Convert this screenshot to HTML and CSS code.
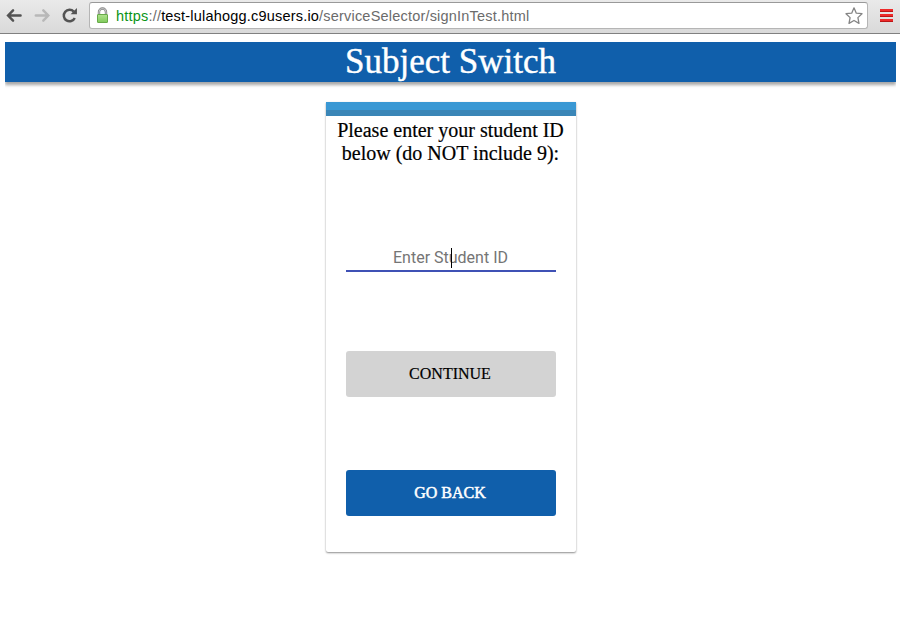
FILE: index.html
```html
<!DOCTYPE html>
<html lang="en">
<head>
<meta charset="utf-8">
<title>Subject Switch</title>
<link rel="stylesheet" href="styles.css">
</head>
<body>
<div class="toolbar">
  <svg class="nav" width="90" height="33" viewBox="0 0 90 33" fill="none">
    <path class="back" d="M20.8 15.5H8.8M13.2 10.3L8.2 15.5L13.2 20.7"/>
    <path class="forward" d="M36.2 15.5H48.2M43.8 10.3L48.8 15.5L43.8 20.7"/>
    <path class="reload" d="M74.6 11.6A5.8 5.8 0 1 0 75.6 18"/>
    <path class="reload-tip" d="M77.8 8V14.2H71.4Z"/>
  </svg>
  <div class="address">
    <svg class="lock" width="13" height="17" viewBox="0 0 13 17">
      <defs><linearGradient id="lockfill" x1="0" y1="0" x2="0" y2="1"><stop offset="0" stop-color="#b0e28f"/><stop offset="1" stop-color="#7fca5a"/></linearGradient></defs>
      <path d="M3 8V5A3.5 3.5 0 0 1 10 5V8" fill="none" stroke="#858585" stroke-width="2.4"/>
      <path d="M3 8V5A3.5 3.5 0 0 1 10 5V8" fill="none" stroke="#d8d8d8" stroke-width=".8"/>
      <rect x="1.5" y="7.5" width="10" height="8" rx=".5" fill="url(#lockfill)" stroke="#67aa49"/>
    </svg>
    <span class="url"><span class="scheme">https</span><span class="path">://</span>test-lulahogg.c9users.io<span class="path">/serviceSelector/signInTest.html</span></span>
    <svg class="star" width="20" height="20" viewBox="0 0 20 20"><path d="M10 1.8L12.3 7.2L18 7.7L13.9 11.6L15 17.4L10 14.5L5 17.4L6.1 11.6L2 7.7L7.7 7.2Z" fill="#fff" stroke="#858585" stroke-width="1.3" stroke-linejoin="round"/></svg>
  </div>
  <div class="menu"><i></i><i></i><i></i></div>
</div>
<header class="banner"><h1>Subject Switch</h1></header>
<main class="card">
  <div class="strip"></div>
  <p class="prompt"><span class="line">Please enter your student ID</span><span class="line second">below (do NOT include 9):</span></p>
  <div class="field"><span class="placeholder">Enter Student ID</span><span class="caret"></span></div>
  <button class="button continue"><span>CONTINUE</span></button>
  <button class="button back-button"><span>GO BACK</span></button>
</main>
</body>
</html>
```

FILE: styles.css
```css
* { box-sizing: border-box; }
body {
  margin: 0;
  height: 636px;
  overflow: hidden;
  background: #fff;
  font-family: "Liberation Serif", serif;
}
.toolbar {
  display: flex;
  height: 34px;
  background: linear-gradient(#eaeaea, #d9d9d9);
  border-bottom: 1px solid #808080;
}
.nav { width: 89px; flex: none; }
.back, .forward, .reload { stroke-width: 2.5; stroke-linecap: round; }
.reload { stroke-linecap: butt; }
.back, .reload { stroke: #535353; }
.forward { stroke: #b8b8b8; }
.reload-tip { fill: #535353; }
.address {
  display: flex;
  align-items: center;
  width: 779px;
  height: 27px;
  margin-top: 2px;
  background: #fff;
  border: 1px solid #b5b5b5;
  border-top-color: #999;
  border-radius: 3px;
}
.lock { margin-left: 6px; flex: none; }
.url {
  margin-left: 7px;
  flex: 1;
  font: 14.5px "Liberation Sans", sans-serif;
  letter-spacing: 0.2px;
  white-space: nowrap;
  color: #000;
}
.scheme { color: #0b9416; }
.path { color: #6b6b6b; }
.star { margin-right: 3px; flex: none; }
.menu {
  display: flex;
  flex-direction: column;
  gap: 2px;
  margin: 9px 0 0 12px;
}
.menu i { width: 13px; height: 3px; background: #ee2a2a; border-bottom: 1px solid #b91717; }
.banner {
  height: 40px;
  margin: 8px 4px 0 5px;
  background: #105fab;
  box-shadow: 0 3px 3px rgba(0, 0, 0, .35);
  clip-path: inset(0 0 -10px 0);
  text-align: center;
}
h1 {
  margin: 0;
  font-size: 35px;
  font-weight: 400;
  line-height: 40px;
  color: #fff;
  -webkit-text-stroke: .4px #fff;
}
.card {
  width: 250px;
  height: 450px;
  margin: 20px 0 0 326px;
  background: #fff;
  border-radius: 0 0 2px 2px;
  box-shadow: 0 1px 2px rgba(0, 0, 0, .45);
}
.strip { height: 14px; background: linear-gradient(#3a98d4 0 8px, #3a86b7 8px); }
.prompt {
  margin: 3px 0 0;
  padding-right: 1px;
  font-size: 20px;
  line-height: 23px;
  text-align: center;
  color: #000;
  -webkit-text-stroke: .2px #000;
}
.line { display: block; white-space: nowrap; }
.field {
  position: relative;
  height: 29px;
  margin: 78px 20px 0;
  padding-right: 1px;
  border-bottom: 2px solid #3f51b5;
  font: 16px/29px Roboto, sans-serif;
  text-align: center;
  color: #757575;
}
.caret {
  position: absolute;
  left: 105px;
  top: 5px;
  width: 1px;
  height: 20px;
  background: #000;
}
.button {
  display: block;
  width: 210px;
  height: 46px;
  margin: 0 20px;
  padding: 0 2px 0 0;
  border: 0;
  border-radius: 3px;
  font: 16px "Liberation Serif", serif;
}
.continue { margin-top: 79px; background: #d3d3d3; color: #000; -webkit-text-stroke: .2px #000; }
.back-button { margin-top: 73px; background: #105fab; color: #fff; -webkit-text-stroke: .5px #fff; }
```
